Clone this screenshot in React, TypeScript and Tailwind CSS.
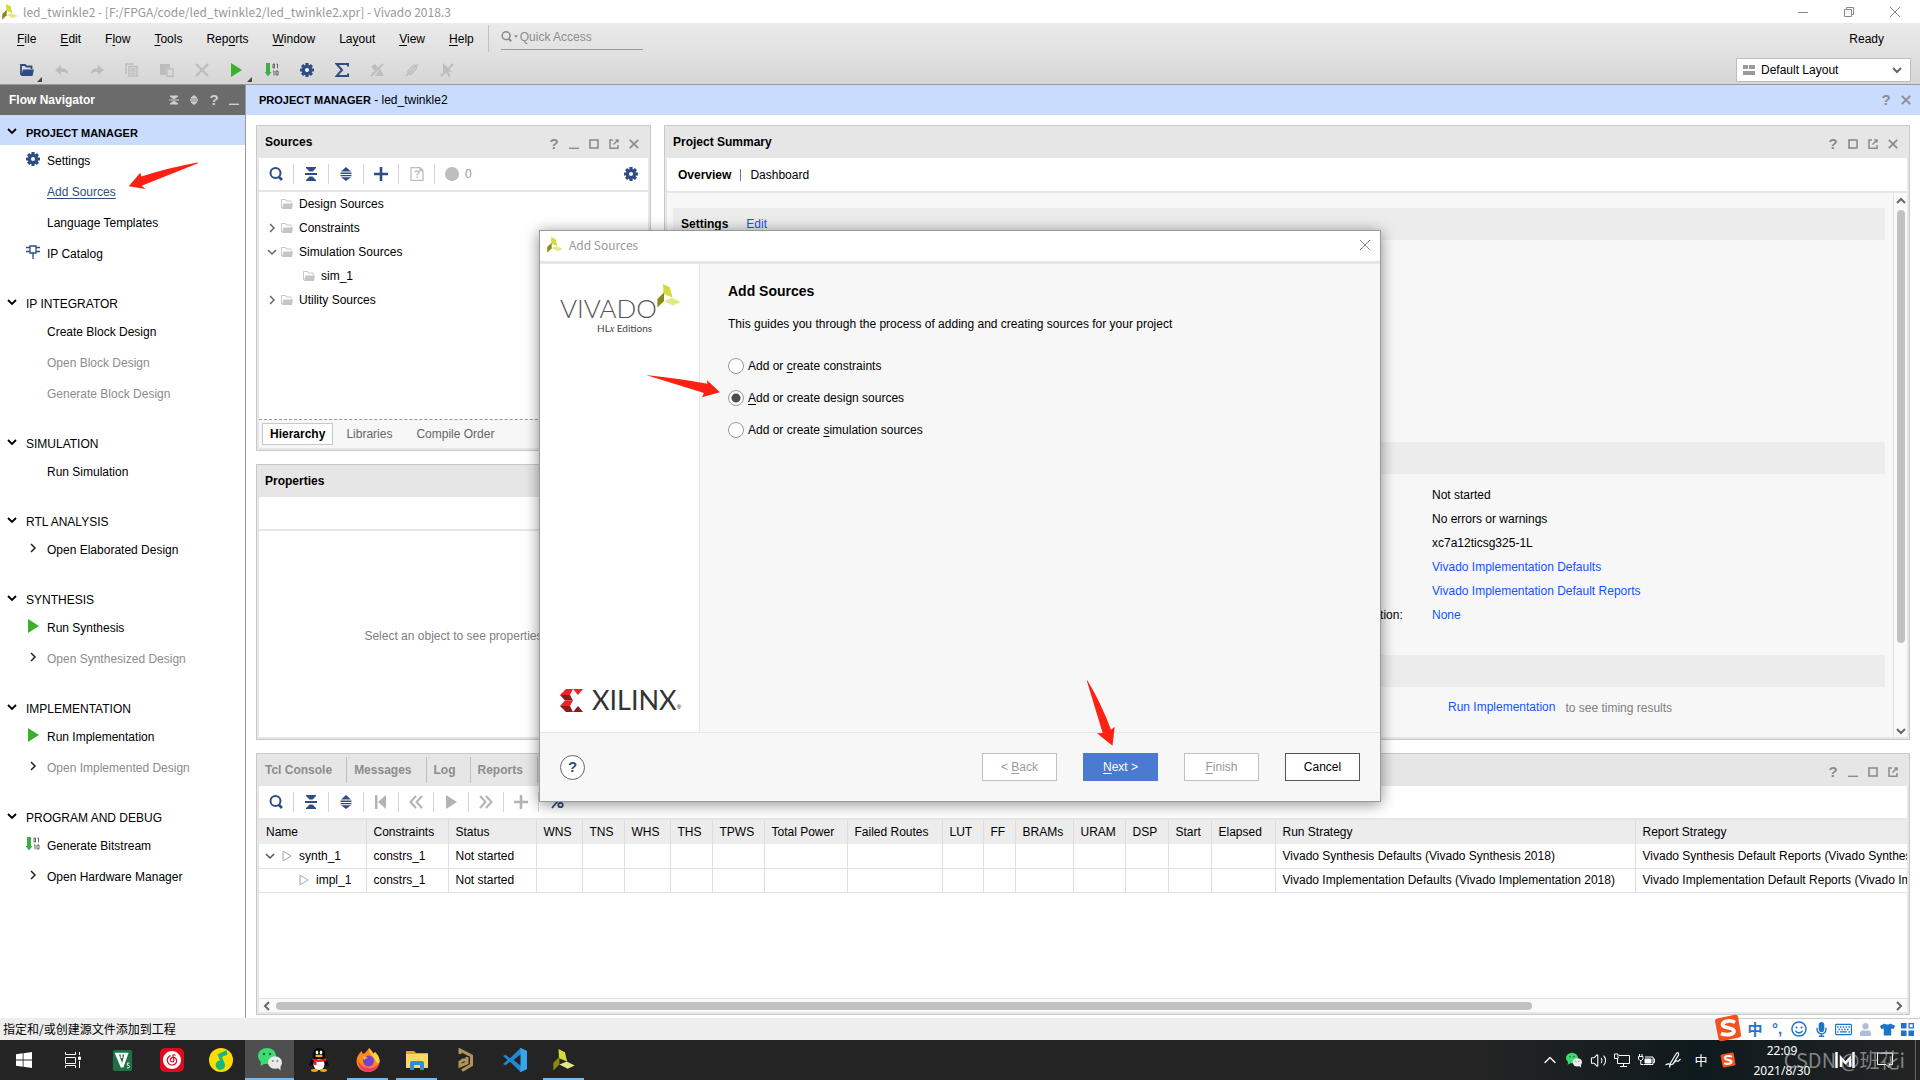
import { useState } from "react";
import type { ReactNode } from "react";
import clsx from "clsx";
import { ChevronUp, Volume2 } from "lucide-react";
import { SiNeteasecloudmusic } from "react-icons/si";
import { FaMicrophone, FaTshirt, FaRegKeyboard, FaRegSmile, FaUser } from "react-icons/fa";

type IconProps = { className?: string };

/* ---------- icons ---------- */

function VivadoMark({ className = "size-4" }: IconProps) {
  return (
    <svg viewBox="0 0 24 24" className={className} aria-hidden="true">
      <path d="M6 0 13 3.5 15.5 13.5 6.5 10Z" fill="#d3dc3a" />
      <path d="M7 8.5V17L.4 23.5V15Z" fill="#888b10" />
      <path d="M7 17 15 13.7 23.6 18 16 21.5Z" fill="#e3e884" />
    </svg>
  );
}

function XilinxMark({ className }: IconProps) {
  return (
    <svg viewBox="0 0 23 23" className={className} aria-hidden="true">
      <path d="M6 0H13L10 6H0Z" fill="#e8262c" />
      <path d="M0 6H10L13 11.5H5Z" fill="#8e1b1f" />
      <path d="M5 11.5H13L10 17H0Z" fill="#e8262c" />
      <path d="M0 17H10L13 23H6Z" fill="#8e1b1f" />
      <path d="M13 0H23L18 6Z" fill="#e8262c" />
      <path d="M13 23H23L18 17Z" fill="#8e1b1f" />
    </svg>
  );
}

function Gear({ className = "size-[14px] text-[#2f4d84]" }: IconProps) {
  return (
    <svg viewBox="0 0 14 14" className={className} aria-hidden="true">
      <g fill="currentColor">
        {[0, 45, 90, 135].map((deg) => (
          <rect key={deg} x="5.4" y="0" width="3.2" height="14" rx=".4" transform={`rotate(${deg} 7 7)`} />
        ))}
        <circle cx="7" cy="7" r="5.2" />
      </g>
      <circle cx="7" cy="7" r="2" fill="white" />
    </svg>
  );
}

function Search({ className = "size-[14px] text-[#2f4d84]" }: IconProps) {
  return (
    <svg viewBox="0 0 14 14" className={className} fill="none" stroke="currentColor" aria-hidden="true">
      <circle cx="6.5" cy="6" r="5" strokeWidth="2" />
      <path d="M9.5 9.5 13 13" strokeWidth="2.6" />
    </svg>
  );
}

function CollapseAll({ className = "size-[14px] text-[#2f4d84]" }: IconProps) {
  return (
    <svg viewBox="0 0 14 14" className={className} fill="currentColor" aria-hidden="true">
      <path d="M2 0H12V1L8.5 4.5H5.5L2 1ZM1 6H13V8H1ZM5.5 9.5H8.5L12 13V14H2V13Z" />
    </svg>
  );
}

function ExpandAll({ className = "size-[14px] text-[#2f4d84]" }: IconProps) {
  return (
    <svg viewBox="0 0 14 14" className={className} fill="currentColor" aria-hidden="true">
      <path d="M7 0 12 4.5H2ZM1.5 5.5H12.5V7H1.5ZM1.5 8H12.5V9.3H1.5ZM2 10.2H12L7 14Z" />
    </svg>
  );
}

function Plus({ className = "size-[14px] text-[#2f4d84]" }: IconProps) {
  return (
    <svg viewBox="0 0 14 14" className={className} stroke="currentColor" strokeWidth="2.6" aria-hidden="true">
      <path d="M7 0V14M0 7H14" />
    </svg>
  );
}

function Play({ className = "w-[11px] h-[14px] text-[#3bb12b]" }: IconProps) {
  return (
    <svg viewBox="0 0 11 14" className={className} fill="currentColor" aria-hidden="true">
      <path d="M0 0 11 7 0 14Z" />
    </svg>
  );
}

function PlayOutline() {
  return (
    <svg viewBox="0 0 10 12" className="w-[10px] h-[12px] shrink-0" fill="none" stroke="#a6a6a6" aria-hidden="true">
      <path d="M1 1 9 6 1 11Z" />
    </svg>
  );
}

function Bitstream() {
  return (
    <svg viewBox="0 0 14 14" className="size-[14px]" aria-hidden="true">
      <path d="M1 0H5V9H6.5L3 13.5-.3 9H1Z" fill="#3fae49" />
      <path d="M8 1V5H9.5V1ZM11.5 1H12.5V5.2M8 8H9V12.5M11 8V12H13V8Z" fill="none" stroke="#555" strokeWidth=".9" />
    </svg>
  );
}

function Chip() {
  return (
    <svg viewBox="0 0 14 14" className="size-[14px]" fill="none" stroke="#2f4d84" strokeWidth="1.3" aria-hidden="true">
      <path d="M4 1H10V8H4ZM0 2.5H4M0 6.5H4M10 2.5H14M10 6.5H14M7 8V14" />
    </svg>
  );
}

function Folder() {
  return (
    <svg viewBox="0 0 12 10" className="w-[12px] h-[10px] shrink-0" aria-hidden="true">
      <path d="M.5 9V.5H4.5L5.5 2H10V4" fill="none" stroke="#c6c6c6" />
      <path d="M2.5 4.5H12L11 10H1Z" fill="#c6c6c6" />
    </svg>
  );
}

function Chevron({ dir, className }: { dir: "down" | "right" | "left" | "up"; className?: string }) {
  const paths = {
    down: "M1 3 5 7 9 3",
    right: "M3 1 7 5 3 9",
    left: "M7 1 3 5 7 9",
    up: "M1 7 5 3 9 7",
  };
  return (
    <svg viewBox="0 0 10 10" className={clsx("size-[10px] shrink-0", className)} fill="none" stroke="currentColor" aria-hidden="true">
      <path d={paths[dir]} />
    </svg>
  );
}

const controlPaths: Record<string, ReactNode> = {
  Minimize: <path d="M0 9.5H10" strokeWidth="1.8" />,
  Maximize: <rect x="1" y="1" width="8" height="8" strokeWidth="1.6" />,
  Float: <path d="M4 1H1V9.2H9V6M4.5 5.5 9 1M6.5 1H9V3.5" strokeWidth="1.5" />,
  Close: <path d="M.8.8 9.2 9.2M9.2.8.8 9.2" strokeWidth="1.8" />,
  "Collapse All": <path d="M1 1H9L5 4ZM0 5H10M1 9H9L5 6Z" strokeWidth="1" fill="currentColor" />,
  "Expand All": <path d="M5 .5 8 3H2ZM1 4.2H9M1 5.8H9M2 7H8L5 9.5Z" strokeWidth="1" fill="currentColor" />,
};

function Controls({ names, className }: { names: string[]; className?: string }) {
  return (
    <div className={clsx("flex items-center text-[#8c8c8c]", className)}>
      {names.map((name) => (
        <button key={name} type="button" aria-label={name} className="w-5 h-5 flex items-center justify-center">
          {name === "Help" ? (
            <span className="text-[15px] leading-5 font-bold">?</span>
          ) : (
            <svg viewBox="0 0 10 10" className="size-[10px]" fill="none" stroke="currentColor">{controlPaths[name]}</svg>
          )}
        </button>
      ))}
    </div>
  );
}

/* ---------- top bars ---------- */

function TitleBar() {
  return (
    <header className="h-[23px] shrink-0 flex items-center bg-white text-[#999]">
      <VivadoMark className="size-[16px] ml-[2px]" />
      <h1 className="ml-[5px] text-[12px] leading-[22px] font-[Noto_Sans_CJK_SC,Noto_Sans,sans-serif]">
        led_twinkle2 - [F:/FPGA/code/led_twinkle2/led_twinkle2.xpr] - Vivado 2018.3
      </h1>
      <div className="ml-auto flex pr-[2px]">
        <button type="button" aria-label="Minimize" className="w-[46px] flex justify-center">
          <svg viewBox="0 0 10 10" className="size-[10px]" stroke="#888"><path d="M0 5.5H10" /></svg>
        </button>
        <button type="button" aria-label="Restore" className="w-[46px] flex justify-center">
          <svg viewBox="0 0 10 10" className="size-[10px]" fill="none" stroke="#888"><path d="M.5 2.5H7.5V9.5H.5ZM2.5 2.5V.5H9.5V7.5H7.5" /></svg>
        </button>
        <button type="button" aria-label="Close" className="w-[46px] flex justify-center">
          <svg viewBox="0 0 10 10" className="size-[10px]" stroke="#888"><path d="M0 0 10 10M10 0 0 10" /></svg>
        </button>
      </div>
    </header>
  );
}

// [before, mnemonic, after]
const menus = [
  ["", "F", "ile"],
  ["", "E", "dit"],
  ["F", "l", "ow"],
  ["", "T", "ools"],
  ["Rep", "o", "rts"],
  ["", "W", "indow"],
  ["La", "y", "out"],
  ["", "V", "iew"],
  ["", "H", "elp"],
];

function Corner() {
  return (
    <svg viewBox="0 0 5 5" className="absolute size-[5px] right-[2px] bottom-0" aria-hidden="true"><path d="M5 0V5H0Z" fill="#444" /></svg>
  );
}

const disabledIcon = "size-[14px] text-[#bdbdbd]";

const toolbar: { name: string; icon: ReactNode }[] = [
  {
    name: "Open",
    icon: (
      <>
        <svg viewBox="0 0 14 12" className="w-[14px] h-[12px]"><path d="M1 11V1H5L6.5 2.5H11.5V5" fill="none" stroke="#2f4d84" strokeWidth="1.8" /><path d="M3 5.5H14L12.5 12H1Z" fill="#2f4d84" /></svg>
        <Corner />
      </>
    ),
  },
  { name: "Undo", icon: <svg viewBox="0 0 14 14" className={disabledIcon}><path d="M0 7 6 2V5C11 5 13.5 8 13.5 12 12 9.5 10 9 6 9V12Z" fill="currentColor" /></svg> },
  { name: "Redo", icon: <svg viewBox="0 0 14 14" className={disabledIcon}><path d="M14 7 8 2V5C3 5 .5 8 .5 12 2 9.5 4 9 8 9V12Z" fill="currentColor" /></svg> },
  { name: "Copy", icon: <svg viewBox="0 0 14 14" className={disabledIcon}><path d="M1 11V1H9M4 3.5H12V13H4ZM5.5 6H10.5M5.5 8H10.5M5.5 10.5H10.5" fill="none" stroke="currentColor" strokeWidth="1.5" /></svg> },
  { name: "Paste", icon: <svg viewBox="0 0 14 14" className={disabledIcon}><path d="M0 1H10V5H6V12H0Z" fill="currentColor" /><path d="M7 6H13V13.3H7Z" fill="none" stroke="currentColor" strokeWidth="1.4" /></svg> },
  { name: "Delete", icon: <svg viewBox="0 0 14 14" className={disabledIcon}><path d="M1 1 13 13M13 1 1 13" stroke="currentColor" strokeWidth="2.4" /></svg> },
  { name: "Run", icon: <><Play /><Corner /></> },
  { name: "Generate Bitstream", icon: <Bitstream /> },
  { name: "Settings", icon: <Gear /> },
  { name: "Report", icon: <svg viewBox="0 0 14 14" className="size-[14px]"><path d="M13 3.5V1H1.5L7 7 1.5 13H13V10.5" fill="none" stroke="#2f4d84" strokeWidth="2" /></svg> },
  { name: "Mark debug", icon: <svg viewBox="0 0 14 14" className={disabledIcon}><path d="M1 13 13 1" stroke="currentColor" strokeWidth="2" /><path d="M1 3.5 5 1 8 5 5 8ZM10 6 14 13H5Z" fill="currentColor" /></svg> },
  { name: "Clip", icon: <svg viewBox="0 0 14 14" className={disabledIcon}><path d="M1 13 13 1M3 8 8 3C10 1 13 4 11 6L6 11C4 12 2 10 3 8ZM5 9 9 5" fill="none" stroke="currentColor" strokeWidth="1.4" /></svg> },
  { name: "Unselect", icon: <svg viewBox="0 0 14 14" className={disabledIcon}><path d="M1 13 13 1" stroke="currentColor" strokeWidth="2.2" /><path d="M3 0 12 8.5 8.5 8.7 10.5 13 8.5 14 6.7 9.7 3 12Z" fill="currentColor" /></svg> },
];

function MenuBar() {
  return (
    <div className="shrink-0 h-[62px] border-b border-[#999] bg-linear-to-b from-[#ebebeb] to-[#d6d6d6]">
      <div className="h-[31px] flex items-center pl-[17px]">
        <nav className="flex gap-6">
          {menus.map(([before, key, after]) => (
            <button key={before + key + after} type="button" className="leading-4">
              {before}<span className="underline underline-offset-2">{key}</span>{after}
            </button>
          ))}
        </nav>
        <label className="ml-[14px] pl-[12px] h-[27px] border-l border-[#c0c0c0] flex items-start">
          <span className="sr-only">Quick Access</span>
          <span className="w-[142px] h-[25px] flex items-center gap-[2px] pb-px border-b border-[#999]">
            <Search className="size-[11px] shrink-0 text-[#8c8c8c]" />
            <svg viewBox="0 0 5 3" className="w-[4px] h-[3px] shrink-0"><path d="M0 0H5L2.5 3Z" fill="#8c8c8c" /></svg>
            <input type="text" placeholder="Quick Access" className="w-full min-w-0 bg-transparent outline-none placeholder:text-[#8c8c8c]" />
          </span>
        </label>
        <span className="ml-auto mr-[36px]">Ready</span>
      </div>
      <div className="h-[30px] pt-[2px] flex items-center pl-[9px] pr-[9px]">
        {toolbar.map((tool) => (
          <button key={tool.name} type="button" aria-label={tool.name} className="relative w-[35px] h-6 flex items-center justify-center">
            {tool.icon}
          </button>
        ))}
        <label className="relative ml-auto">
          <span className="sr-only">Layout</span>
          <select className="appearance-none w-[175px] h-[24px] border border-[#bdbdbd] bg-white pl-[24px] outline-none">
            <option>Default Layout</option>
            <option>IO Planning</option>
            <option>Debug</option>
          </select>
          <svg viewBox="0 0 12 10" className="absolute left-[7px] top-[7px] w-[12px] h-[10px]" fill="#9a9a9a"><path d="M0 0H5V4H0ZM6 0H12V4H6ZM0 6H12V10H0Z" /></svg>
          <Chevron dir="down" className="absolute right-[9px] top-[7px] stroke-2 text-[#666]" />
        </label>
      </div>
    </div>
  );
}

/* ---------- flow navigator ---------- */

type NavItem = { label: string; icon?: ReactNode; disabled?: boolean; hovered?: boolean };

const expandIcon = <Chevron dir="right" className="stroke-[1.5]" />;

const sections: { title: string; active?: boolean; items: NavItem[] }[] = [
  {
    title: "PROJECT MANAGER",
    active: true,
    items: [
      { label: "Settings", icon: <Gear /> },
      { label: "Add Sources", hovered: true },
      { label: "Language Templates" },
      { label: "IP Catalog", icon: <Chip /> },
    ],
  },
  {
    title: "IP INTEGRATOR",
    items: [
      { label: "Create Block Design" },
      { label: "Open Block Design", disabled: true },
      { label: "Generate Block Design", disabled: true },
    ],
  },
  { title: "SIMULATION", items: [{ label: "Run Simulation" }] },
  { title: "RTL ANALYSIS", items: [{ label: "Open Elaborated Design", icon: expandIcon }] },
  {
    title: "SYNTHESIS",
    items: [
      { label: "Run Synthesis", icon: <Play /> },
      { label: "Open Synthesized Design", icon: expandIcon, disabled: true },
    ],
  },
  {
    title: "IMPLEMENTATION",
    items: [
      { label: "Run Implementation", icon: <Play /> },
      { label: "Open Implemented Design", icon: expandIcon, disabled: true },
    ],
  },
  {
    title: "PROGRAM AND DEBUG",
    items: [
      { label: "Generate Bitstream", icon: <Bitstream /> },
      { label: "Open Hardware Manager", icon: expandIcon },
    ],
  },
];

function FlowNavigator() {
  return (
    <aside className="w-[246px] shrink-0 border-r border-[#999] bg-white">
      <div className="h-[30px] flex items-center justify-between bg-[#6b6b6b] pl-[9px] pr-px">
        <h2 className="font-bold text-white">Flow Navigator</h2>
        <Controls names={["Collapse All", "Expand All", "Help", "Minimize"]} className="text-[#d0d0d0]" />
      </div>
      {sections.map((section) => (
        <section key={section.title} className="mb-[22px]">
          <button
            type="button"
            className={clsx(
              "w-full flex items-center pl-[7px] gap-[9px] text-left",
              section.active ? "h-[30px] pt-[5px] bg-[#c9dcfd] text-[11px] font-bold" : "h-[25px]",
            )}
          >
            <Chevron dir="down" className="stroke-[1.8] mb-1" />
            {section.title}
          </button>
          <ul>
            {section.items.map((item) => (
              <li key={item.label} className="relative h-[31px] flex items-center">
                <a href="#" className={clsx("flex items-center", item.disabled && "text-[#8c8c8c]", item.hovered && "text-[#2f4d84] underline underline-offset-2")}>
                  <span className="w-[20px] ml-[23px] mr-[4px] mb-[3px] flex justify-center text-[#222]">{item.icon}</span>
                  {item.label}
                </a>
                {item.hovered && (
                  <svg viewBox="0 0 70 28" className="absolute left-[128px] -top-[14px] w-[70px] h-[28px]" aria-hidden="true">
                    <path d="M.7 24.2 12.3 10.8 13.3 14.5Q40 6 69.5.6 70 1 69.5 1.6L13.7 23.7 17.5 27Z" fill="#fe2012" />
                  </svg>
                )}
              </li>
            ))}
          </ul>
        </section>
      ))}
    </aside>
  );
}

/* ---------- panels ---------- */

function Panel({ title, controls, className, children }: { title: ReactNode; controls: string[]; className?: string; children: ReactNode }) {
  return (
    <section className={clsx("min-h-0 min-w-0 flex flex-col border border-[#c9c9c9] bg-[#e6e6e6] px-[2px] pb-[2px]", className)}>
      <div className="h-[32px] shrink-0 flex items-center justify-between pl-[6px] pr-[4px]">
        {title}
        <Controls names={controls} className="mt-[4px]" />
      </div>
      {children}
    </section>
  );
}

function PanelTitle({ children }: { children: ReactNode }) {
  return <h2 className="font-bold">{children}</h2>;
}

function IconBar({ items }: { items: { name: string; icon: ReactNode }[] }) {
  return (
    <div className="flex items-center divide-x divide-[#d4d4d4]">
      {items.map((item) => (
        <button key={item.name} type="button" aria-label={item.name} className="w-[35px] h-[20px] flex items-center justify-center">
          {item.icon}
        </button>
      ))}
    </div>
  );
}

const tree = [
  { label: "Design Sources", pad: "pl-[22px]" },
  { label: "Constraints", pad: "pl-[8px]", dir: "right" as const },
  { label: "Simulation Sources", pad: "pl-[8px]", dir: "down" as const },
  { label: "sim_1", pad: "pl-[44px]" },
  { label: "Utility Sources", pad: "pl-[8px]", dir: "right" as const },
];

function SourcesPanel() {
  return (
    <Panel title={<PanelTitle>Sources</PanelTitle>} controls={["Help", "Minimize", "Maximize", "Float", "Close"]} className="flex-[326_0_0]">
      <div className="h-[32px] shrink-0 bg-white flex items-center">
        <IconBar
          items={[
            { name: "Search", icon: <Search /> },
            { name: "Collapse All", icon: <CollapseAll /> },
            { name: "Expand All", icon: <ExpandAll /> },
            { name: "Add Sources", icon: <Plus /> },
            { name: "Properties", icon: <svg viewBox="0 0 14 14" className="size-[14px]"><path d="M1 .7H10L13 3.5V13.3H1ZM10 .7V3.5H13M5 5.5Q5 4 7 4T9 5.7Q9 6.7 7 7.7V8.5M7 9.5V11" fill="none" stroke="#bdbdbd" strokeWidth="1.3" /></svg> },
          ]}
        />
        <span className="border-l border-[#d4d4d4] h-[20px] flex items-center gap-[6px] pl-[10px] text-[#9a9a9a]">
          <span className="size-[14px] rounded-full bg-[#bdbdbd]" />0
        </span>
        <button type="button" aria-label="Settings" className="ml-auto mr-[10px]"><Gear /></button>
      </div>
      <ul className="mt-[2px] flex-1 bg-white">
        {tree.map((node) => (
          <li key={node.label} className={clsx("h-[24px] flex items-center", node.pad)}>
            {node.dir && <Chevron dir={node.dir} className="mr-[4px] text-[#666] stroke-[1.5]" />}
            <Folder />
            <span className="ml-[6px]">{node.label}</span>
          </li>
        ))}
      </ul>
      <div className="h-[29px] shrink-0 flex items-center border-t border-dashed border-[#999] bg-[#f7f7f7] pl-[3px] text-[#666]">
        <button type="button" className="h-[22px] px-[7px] border border-[#c9c9c9] bg-white font-bold text-black">Hierarchy</button>
        <button type="button" className="ml-[13px]">Libraries</button>
        <button type="button" className="ml-[24px]">Compile Order</button>
      </div>
    </Panel>
  );
}

function PropertiesPanel() {
  return (
    <Panel title={<PanelTitle>Properties</PanelTitle>} controls={["Help", "Minimize", "Maximize", "Float", "Close"]} className="flex-[276_0_0]">
      <div className="h-[32px] shrink-0 bg-white" />
      <div className="mt-[2px] pt-1 flex-1 bg-white flex items-center justify-center text-[#808080]">Select an object to see properties</div>
    </Panel>
  );
}

const summaryRows = [
  ["Status:", "Not started", false],
  ["Messages:", "No errors or warnings", false],
  ["Part:", "xc7a12ticsg325-1L", false],
  ["Strategy:", "Vivado Implementation Defaults", true],
  ["Report Strategy:", "Vivado Implementation Default Reports", true],
  ["Incremental implementation:", "None", true],
] as const;

function SummaryPanel() {
  return (
    <Panel title={<PanelTitle>Project Summary</PanelTitle>} controls={["Help", "Maximize", "Float", "Close"]} className="flex-1">
      <div className="h-[33px] shrink-0 bg-white flex items-center pl-[11px]">
        <button type="button" className="font-bold pr-[9px]">Overview</button>
        <button type="button" className="border-l border-[#777] leading-3 pl-[9px]">Dashboard</button>
      </div>
      <div className="mt-[2px] flex-1 min-h-0 flex bg-[#f7f7f7]">
        <div className="flex-1 min-w-0 pt-[15px] pl-[6px] pr-[8px]">
          <div className="h-[32px] bg-[#ececec] flex items-center gap-[18px] pl-[8px]">
            <h3 className="font-bold">Settings</h3>
            <a href="#" className="text-[#1155ff]">Edit</a>
          </div>
          <div className="h-[202px]" />
          <div className="h-[32px] bg-[#ececec]" />
          <dl className="mt-[9px] ml-[579px]">
            {summaryRows.map(([label, value, link]) => (
              <div key={label} className="h-[24px] flex items-center whitespace-nowrap">
                <dt className="w-[152px] shrink-0 mr-[28px]">{label}</dt>
                <dd>{link ? <a href="#" className="text-[#1155ff]">{value}</a> : value}</dd>
              </div>
            ))}
          </dl>
          <div className="mt-[28px] h-[32px] bg-[#ececec]" />
          <p className="mt-[10px] ml-[775px] flex items-center gap-[10px] text-[#808080]">
            <a href="#" className="text-[#1155ff]">Run Implementation</a>
            <span className="pt-[3px]">to see timing results</span>
          </p>
        </div>
        <div className="w-[14px] border-l border-[#e0e0e0] bg-[#fafafa] flex flex-col items-center pt-[3px] pb-px text-[#666]">
          <Chevron dir="up" className="stroke-2" />
          <div className="mt-[4px] w-[8px] grow-[433] rounded-full bg-[#c1c1c1]" />
          <div className="grow-[83]" />
          <Chevron dir="down" className="stroke-2" />
        </div>
      </div>
    </Panel>
  );
}

/* ---------- design runs ---------- */

const columns = [
  { name: "Name", width: "w-[107px]" },
  { name: "Constraints", width: "w-[82px]" },
  { name: "Status", width: "w-[88px]" },
  { name: "WNS", width: "w-[46px]" },
  { name: "TNS", width: "w-[42px]" },
  { name: "WHS", width: "w-[46px]" },
  { name: "THS", width: "w-[42px]" },
  { name: "TPWS", width: "w-[52px]" },
  { name: "Total Power", width: "w-[83px]" },
  { name: "Failed Routes", width: "w-[95px]" },
  { name: "LUT", width: "w-[41px]" },
  { name: "FF", width: "w-[32px]" },
  { name: "BRAMs", width: "w-[58px]" },
  { name: "URAM", width: "w-[52px]" },
  { name: "DSP", width: "w-[43px]" },
  { name: "Start", width: "w-[43px]" },
  { name: "Elapsed", width: "w-[64px]" },
  { name: "Run Strategy", width: "w-[360px]" },
  { name: "Report Strategy", width: "w-[420px]" },
];

const runs: { cells: Record<string, string>; child?: boolean }[] = [
  {
    cells: {
      Name: "synth_1",
      Constraints: "constrs_1",
      Status: "Not started",
      "Run Strategy": "Vivado Synthesis Defaults (Vivado Synthesis 2018)",
      "Report Strategy": "Vivado Synthesis Default Reports (Vivado Synthesis 2018)",
    },
  },
  {
    child: true,
    cells: {
      Name: "impl_1",
      Constraints: "constrs_1",
      Status: "Not started",
      "Run Strategy": "Vivado Implementation Defaults (Vivado Implementation 2018)",
      "Report Strategy": "Vivado Implementation Default Reports (Vivado Implementation 2018)",
    },
  },
];

const gray = "text-[#b3b3b3]";

function RunsPanel() {
  return (
    <Panel
      title={
        <div className="flex items-center self-stretch text-[#8c8c8c] font-bold divide-x divide-[#c0c0c0]">
          {["Tcl Console", "Messages", "Log", "Reports", "Design Runs"].map((tab) => (
            <button key={tab} type="button" className="h-[26px] pr-[14px] pl-[7px] first:pl-0">{tab}</button>
          ))}
        </div>
      }
      controls={["Help", "Minimize", "Maximize", "Float"]}
      className="h-[262px] shrink-0"
    >
      <div className="h-[32px] shrink-0 bg-white flex items-center">
        <IconBar
          items={[
            { name: "Search", icon: <Search /> },
            { name: "Collapse All", icon: <CollapseAll /> },
            { name: "Expand All", icon: <ExpandAll /> },
            { name: "First", icon: <svg viewBox="0 0 14 14" className={clsx("size-[14px]", gray)} fill="currentColor"><path d="M1 0H3.5V14H1ZM12 0V14L4 7Z" /></svg> },
            { name: "Previous", icon: <svg viewBox="0 0 14 14" className={clsx("size-[14px]", gray)} fill="none" stroke="currentColor" strokeWidth="2"><path d="M7 1 1.5 7 7 13M13 1 7.5 7 13 13" /></svg> },
            { name: "Run", icon: <Play className="w-[11px] h-[14px] text-[#b3b3b3]" /> },
            { name: "Next", icon: <svg viewBox="0 0 14 14" className={clsx("size-[14px]", gray)} fill="none" stroke="currentColor" strokeWidth="2"><path d="M1 1 6.5 7 1 13M7 1 12.5 7 7 13" /></svg> },
            { name: "Create Runs", icon: <Plus className={clsx("size-[14px]", gray)} /> },
            { name: "Show Percentage", icon: <svg viewBox="0 0 14 14" className="size-[14px] text-[#2f4d84]" fill="none" stroke="currentColor" strokeWidth="1.8"><path d="M12 1 2 13" /><circle cx="3.5" cy="4" r="2.2" /><circle cx="10.5" cy="10" r="2.2" /></svg> },
          ]}
        />
      </div>
      <div className="mt-[2px] flex-1 min-h-0 overflow-hidden bg-white">
        <table className="table-fixed w-[1796px] border-collapse whitespace-nowrap">
          <thead>
            <tr className="h-[24px] bg-[#ececec]">
              {columns.map((col) => (
                <th key={col.name} scope="col" className={clsx("p-0 pl-[7px] text-left font-normal border-r border-[#dcdcdc]", col.width)}>{col.name}</th>
              ))}
            </tr>
          </thead>
          <tbody>
            {runs.map((run) => (
              <tr key={run.cells.Name} className="h-[24px] border-b border-[#e0e0e0]">
                {columns.map((col) => (
                  <td key={col.name} className="p-0 pl-[7px] border-r border-[#e0e0e0]">
                    {col.name === "Name" ? (
                      <span className={clsx("flex items-center gap-[7px]", run.child && "pl-[33px]")}>
                        {!run.child && <Chevron dir="down" className="-ml-px text-[#555] stroke-[1.5]" />}
                        <PlayOutline />
                        {run.cells.Name}
                      </span>
                    ) : (
                      run.cells[col.name]
                    )}
                  </td>
                ))}
              </tr>
            ))}
          </tbody>
        </table>
      </div>
      <div className="h-[14px] shrink-0 border-t border-[#e0e0e0] bg-[#fafafa] flex items-center px-[3px] text-[#666]">
        <Chevron dir="left" className="stroke-2" />
        <div className="ml-[4px] h-[8px] grow-[1256] rounded-full bg-[#c1c1c1]" />
        <div className="grow-[362]" />
        <Chevron dir="right" className="stroke-2" />
      </div>
    </Panel>
  );
}

/* ---------- add sources dialog ---------- */

const options = [
  ["Add or ", "c", "reate constraints"],
  ["", "A", "dd or create design sources"],
  ["Add or create ", "s", "imulation sources"],
];

function AddSourcesDialog() {
  const [selected, setSelected] = useState(1);
  const button = "w-[75px] h-[28px] border";

  return (
    <div className="absolute inset-0 pb-2 flex items-center justify-center">
      <div
        role="dialog"
        aria-labelledby="dialog-title"
        className="relative w-[842px] h-[572px] flex flex-col border border-[#9a9a9a] bg-[#f7f7f7] shadow-[0_2px_14px_rgba(0,0,0,0.45)]"
      >
        <div className="h-[30px] shrink-0 bg-white flex items-center pl-[7px] pr-[10px] pb-[2px] text-[#999]">
          <VivadoMark className="size-[16px]" />
          <h2 id="dialog-title" className="ml-[6px] mr-auto text-[12px] leading-[22px] font-[Noto_Sans_CJK_SC,Noto_Sans,sans-serif]">Add Sources</h2>
          <button type="button" aria-label="Close">
            <svg viewBox="0 0 10 10" className="size-[10px]" stroke="#888"><path d="M0 0 10 10M10 0 0 10" /></svg>
          </button>
        </div>
        <div className="flex-1 flex border-t-3 border-b border-[#e6e6e6]">
          <div className="w-[160px] shrink-0 bg-white border-r border-[#e6e6e6] flex flex-col justify-between pl-[20px] pt-[20px] pb-[17px]">
            <div>
              <div className="h-[38px] flex items-start">
                <span className="mt-[9px] text-[26px] leading-[30px] font-light font-[Lato,sans-serif] text-[#555]">VIVADO</span>
                <VivadoMark className="size-[24px] shrink-0" />
              </div>
              <p className="pl-[37px] text-[10px] leading-3 font-[Lato,sans-serif] text-[#444]">HL<i className="font-[Liberation_Serif,serif]">x</i> Editions</p>
            </div>
            <div className="flex items-center">
              <XilinxMark className="size-[23px] shrink-0" />
              <span className="ml-[9px] text-[27px] leading-[30px] font-normal font-[Lato,sans-serif] text-[#333]">XILINX</span>
              <span className="self-end text-[6px] leading-4">®</span>
            </div>
          </div>
          <fieldset className="pl-[28px] pt-[17px]">
            <legend className="sr-only">Source type</legend>
            <h3 className="text-[14px] leading-5 font-bold">Add Sources</h3>
            <p className="mt-[15px] leading-4">This guides you through the process of adding and creating sources for your project</p>
            <div className="mt-[18px]">
              {options.map(([before, key, after], index) => (
                <label key={index} className="h-[32px] flex items-center gap-[4px]">
                  <input
                    type="radio"
                    name="source-type"
                    checked={selected === index}
                    onChange={() => setSelected(index)}
                    className="appearance-none size-[16px] rounded-full border border-[#999] bg-white checked:bg-[radial-gradient(circle,#4d4d4d_4px,white_5px)]"
                  />
                  <span>{before}<span className="underline underline-offset-2">{key}</span>{after}</span>
                </label>
              ))}
            </div>
          </fieldset>
        </div>
        <div className="h-[68px] shrink-0 flex items-center pl-[20px] pr-[20px] gap-[26px]">
          <button type="button" aria-label="Help" className="size-[25px] mr-auto rounded-full border border-[#666] bg-white text-[15px] font-bold text-[#2f4d84]">?</button>
          <button type="button" disabled className={clsx(button, "border-[#c0c0c0] bg-white text-[#999]")}>&lt; <u className="underline-offset-2">B</u>ack</button>
          <button type="button" className={clsx(button, "border-[#4a7bd0] bg-[#4a7bd0] text-white")}><u className="underline-offset-2">N</u>ext &gt;</button>
          <button type="button" disabled className={clsx(button, "border-[#c0c0c0] bg-white text-[#999]")}><u className="underline-offset-2">F</u>inish</button>
          <button type="button" className={clsx(button, "border-[#555] bg-white")}>Cancel</button>
        </div>
        <svg viewBox="0 0 76 24" className="absolute left-[105px] top-[143px] w-[76px] h-[24px]" aria-hidden="true">
          <path d="M1 1Q30 4 62.5 9.7L61.8 6 75 18.3 57 23.3 59 19Z" fill="#fe2012" />
        </svg>
        <svg viewBox="0 0 30 68" className="absolute left-[546px] top-[447px] w-[30px] h-[68px]" aria-hidden="true">
          <path d="M.8 2.7Q1.5 2 2 3.5 15 25 25 51.7L28.7 48.7 26.5 67.7 11 55.3 16.7 55Z" fill="#fe2012" />
        </svg>
      </div>
    </div>
  );
}

/* ---------- status bar and taskbar ---------- */

function SogouMark({ className }: IconProps) {
  return (
    <svg viewBox="0 0 28 28" className={className} aria-hidden="true">
      <path d="M3 4.5Q1 5 1 7L4.5 25Q5 27.5 7.5 27.2L25 23.5Q27.5 23 27 20.5L24 2.5Q23.5.3 21 .8Z" fill="#f4511e" />
      <path d="M21 8.5C17 6 9 6.5 8.5 10.5S20 13 20 17 12 21.5 7 19.5" fill="none" stroke="white" strokeWidth="3.8" />
    </svg>
  );
}

function WechatIcon({ className }: IconProps) {
  return (
    <svg viewBox="0 0 24 24" className={className} aria-hidden="true">
      <ellipse cx="9" cy="9" rx="9" ry="8" fill="#3ddb72" />
      <path d="M3 14 2.5 19 8 16Z" fill="#3ddb72" />
      <circle cx="6" cy="7" r="1.2" fill="#1a6b37" /><circle cx="12" cy="7" r="1.2" fill="#1a6b37" />
      <ellipse cx="17" cy="15.5" rx="7" ry="6.3" fill="#e9e9e9" />
      <path d="M19 20 22.5 23.5 22.5 18Z" fill="#e9e9e9" />
      <circle cx="14.8" cy="14" r="1" fill="#888" /><circle cx="19.3" cy="14" r="1" fill="#888" />
    </svg>
  );
}

const apps: { name: string; state?: string; icon: ReactNode }[] = [
  {
    name: "uVision",
    icon: (
      <svg viewBox="0 0 22 24" className="w-[21px] h-[21px]">
        <rect width="22" height="24" rx="2" fill="#1f7044" />
        <path d="M2 3H18L12 20H9ZM7 5 10.5 15 13 5H11V9H9V5Z" fill="white" fillRule="evenodd" />
        <path d="M19 15H16.5V17.5Q19 17 19 19T16 20.5" fill="none" stroke="white" />
      </svg>
    ),
  },
  { name: "NetEase Music", icon: <span className="size-[24px] rounded-[5px] bg-[#df0a1e] flex items-center justify-center"><SiNeteasecloudmusic className="size-[18px] text-white" /></span> },
  {
    name: "QQ Music",
    icon: (
      <svg viewBox="0 0 24 24" className="size-[24px]">
        <circle cx="12" cy="12" r="12" fill="#fddc05" />
        <path d="M17.5 2 18.5 6.5 13 9 15.5 15A4.7 4.7 0 1 1 11 12.5L8.5 6.5Z" fill="#15b877" />
      </svg>
    ),
  },
  { name: "WeChat", state: "bg-[#4f4f4f] border-b-2 border-[#76b9ed]", icon: <WechatIcon className="size-[24px]" /> },
  {
    name: "QQ",
    icon: (
      <svg viewBox="0 0 22 24" className="w-[22px] h-[24px]">
        <path d="M5 9C4.5 3 7 0 11 0S17.5 3 17 9Q21 14 20.5 18L18 17Q16 22 11 22T4 17L1.5 18Q1 14 5 9Z" fill="#0a0a0a" />
        <ellipse cx="11" cy="16.5" rx="5.5" ry="5.5" fill="white" />
        <ellipse cx="9" cy="4.5" rx="1.3" ry="1.9" fill="white" /><ellipse cx="13" cy="4.5" rx="1.3" ry="1.9" fill="white" />
        <path d="M3.5 10Q11 13.5 18.5 10V12.5Q11 15 8.5 13.5V17H6V13Z" fill="#e8202a" />
        <ellipse cx="11" cy="8" rx="3.8" ry="1.2" fill="#f6a81c" />
        <ellipse cx="6.5" cy="22.5" rx="3.5" ry="1.4" fill="#f6a81c" /><ellipse cx="15.5" cy="22.5" rx="3.5" ry="1.4" fill="#f6a81c" />
      </svg>
    ),
  },
  {
    name: "Firefox",
    state: "running",
    icon: (
      <svg viewBox="0 0 24 24" className="size-[24px]">
        <path d="M3 6 5.5 3 7 6Q10 5 13 0 16 3 17.5 6L19 4Q24 9 23.5 14C23 20 18 24 12 24S.5 19.5.5 13Q.5 9 3 6Z" fill="#ff8a1c" />
        <path d="M13 0Q16 3 17.5 6L19 4Q24 9 23.5 14C22 18 20 13 18 10S13 5 13 0Z" fill="#ffd43a" />
        <path d="M2 12C2 20 8 24 12 24S23 21 23.5 14Q20 21 12 20T2 12Z" fill="#f4356b" />
        <circle cx="12.5" cy="13" r="5.5" fill="#7a3fd0" /><path d="M6 9Q9 7 12 10 9 10 8.5 12Z" fill="#ffb52e" />
      </svg>
    ),
  },
  {
    name: "Explorer",
    state: "running",
    icon: (
      <svg viewBox="0 0 22 20" className="w-[22px] h-[20px]">
        <path d="M0 1H8L10 3H22V17H0Z" fill="#e5a81d" /><path d="M0 4H22V18H0Z" fill="#ffd766" />
        <path d="M4 20V13Q4 11 6 11H16Q18 11 18 13V20H14V15H8V20Z" fill="#2f8be0" />
      </svg>
    ),
  },
  {
    name: "Altium Designer",
    icon: (
      <svg viewBox="0 0 16 24" className="w-[16px] h-[24px]" fill="none" stroke="#b1945a" strokeWidth="3">
        <path d="M2 6V2L13.5 8V17L4 22.5M10 12H5L2 14V18L9 15V9" />
      </svg>
    ),
  },
  {
    name: "Visual Studio Code",
    icon: (
      <svg viewBox="0 0 24 24" className="size-[24px]">
        <path d="M17.5 0 24 3V21L17.5 24 7 13.7 2.5 17.2 0 16 4.7 12 0 8 2.5 6.8 7 10.3Z" fill="#1f8ad2" />
        <path d="M17.5 0 24 3V21L17.5 24Z" fill="#36a5ee" /><path d="M17.5 6.5V17.5L10.5 12Z" fill="#242424" />
      </svg>
    ),
  },
  { name: "Vivado", state: "running", icon: <VivadoMark className="size-[22px]" /> },
];

function StatusBar() {
  return (
    <footer className="h-[22px] shrink-0 flex items-center justify-between bg-[#eee] pl-[3px]">
      <span className="font-[Noto_Sans_CJK_SC,sans-serif] leading-5">指定和/或创建源文件添加到工程</span>
      <div className="relative h-full w-[182px] flex items-center bg-white pl-[6px] pb-px border-t border-[#ccc] text-[#1f74c9]">
        <SogouMark className="absolute -left-[24px] -top-[5px] size-[28px] z-10" />
        <span className="w-[22px] text-center text-[15px] leading-5 font-bold font-[Noto_Sans_CJK_SC,sans-serif]">中</span>
        <span className="w-[22px] text-center text-[15px] leading-5 font-bold">°,</span>
        <span className="w-[22px] flex justify-center"><FaRegSmile className="size-[16px]" /></span>
        <span className="w-[22px] flex justify-center"><FaMicrophone className="size-[15px]" /></span>
        <span className="w-[22px] flex justify-center"><FaRegKeyboard className="size-[17px]" /></span>
        <span className="w-[22px] flex justify-center"><FaUser className="size-[13px] text-[#aebfd8]" /></span>
        <span className="w-[22px] flex justify-center"><FaTshirt className="size-[15px]" /></span>
        <span className="w-[18px] flex justify-center">
          <svg viewBox="0 0 14 14" className="size-[13px]" fill="currentColor"><path d="M0 0H6V6H0ZM8 8H14V14H8ZM0 8H6V14H0Z" /><path d="M8.7.7H13.3V5.3H8.7Z" fill="none" stroke="currentColor" strokeWidth="1.4" /></svg>
        </span>
      </div>
    </footer>
  );
}

function Taskbar() {
  return (
    <div className="relative h-[40px] shrink-0 flex bg-[#242424] text-white">
      <button type="button" aria-label="Start" className="w-[48px] flex items-center justify-center">
        <svg viewBox="0 0 16 16" className="size-[16px]" fill="white"><path d="M0 2.2 6.7 1.3V7.6H0ZM7.5 1.2 16 0V7.6H7.5ZM0 8.4H6.7V14.7L0 13.8ZM7.5 8.4H16V16L7.5 14.8Z" /></svg>
      </button>
      <button type="button" aria-label="Task View" className="w-[50px] flex items-center justify-center">
        <svg viewBox="0 0 16 16" className="size-[16px]" fill="none" stroke="white"><path d="M.5 0V2.5H10.5V0M.5 5.5H10.5V11.5H.5ZM.5 16V13.5H10.5V16M14.5 0V3M14.5 9V16" /><path d="M13.5 5H15.5V7.5H13.5Z" fill="white" /></svg>
      </button>
      {apps.map((app) => (
        <button
          key={app.name}
          type="button"
          aria-label={app.name}
          className={clsx("relative w-[49px] flex items-center justify-center", app.state !== "running" && app.state)}
        >
          {app.icon}
          {app.state === "running" && <span className="absolute inset-x-[4px] bottom-0 h-[2px] bg-[#76b9ed]" />}
        </button>
      ))}
      <div className="ml-auto flex items-center bg-linear-to-r from-[#242424] via-[#0e1a1e] to-[#242424] pl-[60px] pr-[18px]">
        <span className="w-[24px] flex justify-center"><ChevronUp className="size-[20px]" strokeWidth={1.5} /></span>
        <span className="w-[24px] flex justify-center"><WechatIcon className="size-[16px]" /></span>
        <span className="w-[24px] flex justify-center"><Volume2 className="size-[17px]" strokeWidth={1.5} /></span>
        <span className="w-[24px] flex justify-center">
          <svg viewBox="0 0 16 14" className="w-[16px] h-[14px]" fill="none" stroke="white"><path d="M5 2.5H15.5V10.5H3.5V6M.5 1V5.5H4V1ZM9.5 10.5V13.5M6 13.5H13" /></svg>
        </span>
        <span className="w-[24px] flex justify-center">
          <svg viewBox="0 0 17 12" className="w-[17px] h-[12px]" fill="none" stroke="white"><path d="M5.5 10.5H15V3H7M15 5H16.5V8.5H15M1.5 0V2M4 0V2M.5 2.5H5V5L3.5 6.5H2L.5 5ZM2.8 6.5V10.5H5" /><path d="M7 5H13V9H7Z" fill="white" /></svg>
        </span>
        <span className="w-[30px] flex justify-center">
          <svg viewBox="0 0 16 16" className="size-[16px]" fill="none" stroke="white" strokeWidth="1.2"><path d="M.5 13Q6 10 4.5 15.5M5 12 11 2Q14-1 13.5 3L8 12 5 13ZM8 12Q11 8 12 9T15.5 7" /></svg>
        </span>
        <span className="w-[26px] text-center text-[13px] leading-5 font-[Noto_Sans_CJK_SC,sans-serif]">中</span>
        <span className="w-[28px] flex justify-center"><SogouMark className="size-[16px]" /></span>
        <span className="w-[80px] pt-px text-center leading-5 font-[Noto_Sans,sans-serif]">22:09<br />2021/8/30</span>
        <span className="w-[46px] flex justify-center">
          <svg viewBox="0 0 20 16" className="w-[20px] h-[16px]" fill="none" stroke="white" strokeWidth="2.5"><path d="M1.5 0V16M6 15V6L10.5 11 15 6V15M18.5 0V16" /></svg>
        </span>
        <span className="w-[34px] flex justify-center">
          <svg viewBox="0 0 16 16" className="size-[16px]" fill="none" stroke="white"><path d="M.5 1H15.5V12.5H12V15.5L9 12.5H.5Z" /></svg>
        </span>
      </div>
      <span className="absolute right-[15px] top-[4px] text-[20px] leading-[32px] whitespace-nowrap text-[#c8c8c8]/60 font-[Noto_Sans_CJK_SC,sans-serif]">CSDN @班花i</span>
      <span className="absolute right-[4px] inset-y-0 w-px bg-[#666]" />
    </div>
  );
}

export default function App() {
  return (
    <div className="h-screen flex flex-col overflow-hidden bg-white text-black text-[12px] leading-4 font-[Liberation_Sans,Arial,sans-serif]">
      <div className="relative flex-1 min-h-0 flex flex-col">
        <TitleBar />
        <MenuBar />
        <div className="flex-1 min-h-0 flex">
          <FlowNavigator />
          <main className="flex-1 min-w-0 flex flex-col">
            <div className="h-[30px] shrink-0 flex items-center justify-between bg-[#c9dcfd] pl-[13px] pr-[4px]">
              <p><b className="text-[11px]">PROJECT MANAGER</b> - led_twinkle2</p>
              <Controls names={["Help", "Close"]} />
            </div>
            <div className="flex-1 min-h-0 flex flex-col gap-[13px] pt-[10px] pb-[3px] pl-[10px] pr-[10px]">
              <div className="flex-1 min-h-0 flex gap-[13px]">
                <div className="w-[395px] shrink-0 flex flex-col gap-[13px]">
                  <SourcesPanel />
                  <PropertiesPanel />
                </div>
                <SummaryPanel />
              </div>
              <RunsPanel />
            </div>
          </main>
        </div>
        <StatusBar />
        <AddSourcesDialog />
      </div>
      <Taskbar />
    </div>
  );
}
